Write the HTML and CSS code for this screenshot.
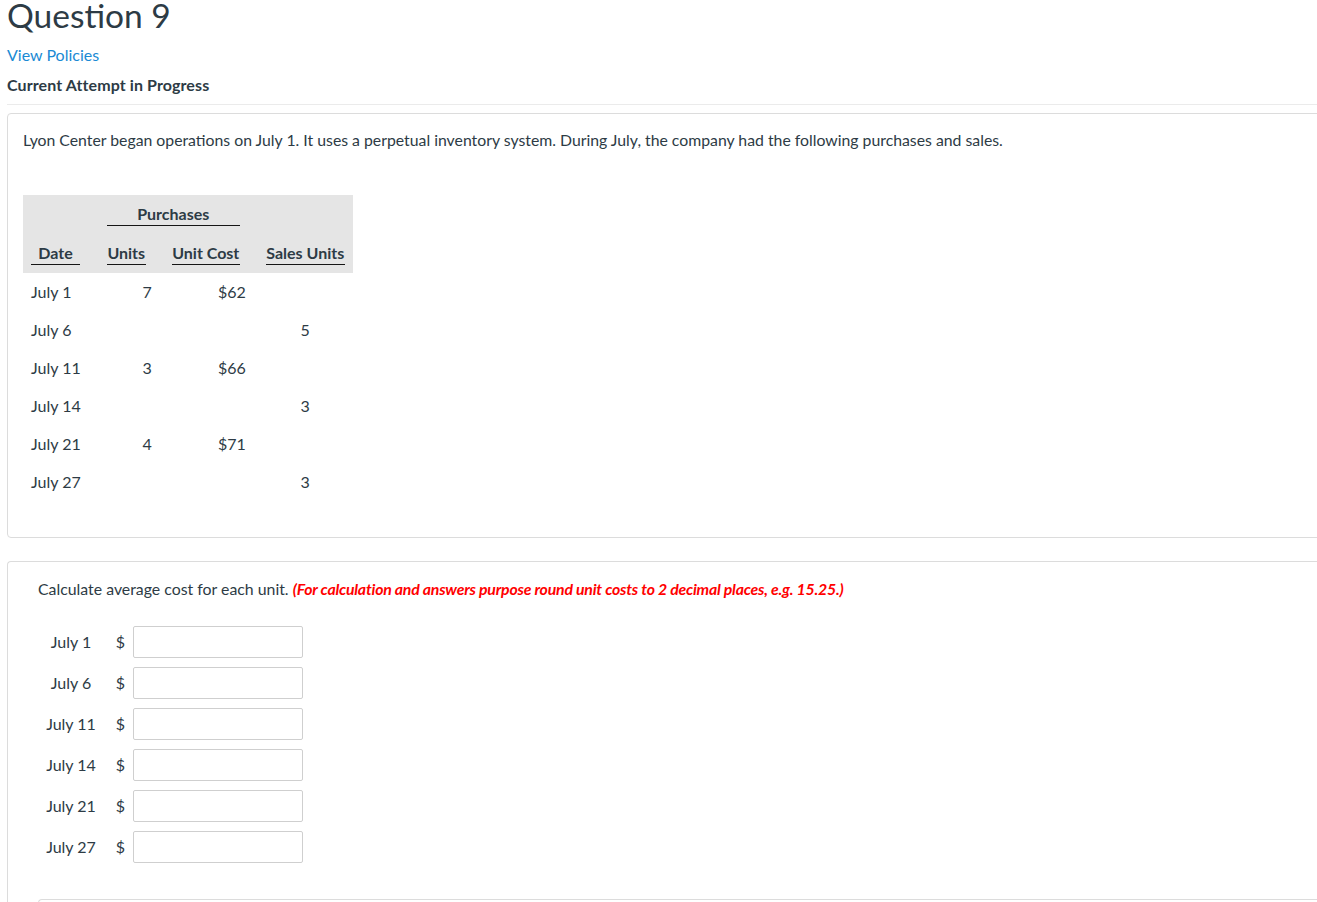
FILE: index.html
```html
<!DOCTYPE html>
<html lang="en">
<head>
    <meta charset="UTF-8">
    <title>Question 9</title>
    <link rel="stylesheet" href="styles.css">
</head>
<body>
    <div class="page">
        <h1 class="question-title">Question 9</h1>
        <a class="policies" href="#">View Policies</a>
        <div class="attempt">Current Attempt in Progress</div>

        <div class="panel intro">
            <p>Lyon Center began operations on July 1. It uses a perpetual inventory system. During July, the company had the following purchases and sales.</p>

            <table class="inventory">
                <thead>
                    <tr>
                        <th class="c-date"></th>
                        <th colspan="2" class="c-purch"><span>Purchases</span></th>
                        <th class="c-sales"></th>
                    </tr>
                    <tr>
                        <th class="c-date"><span>Date</span></th>
                        <th class="c-units"><span>Units</span></th>
                        <th class="c-cost"><span>Unit Cost</span></th>
                        <th class="c-sales"><span>Sales Units</span></th>
                    </tr>
                </thead>
                <tbody>
                    <tr><td class="c-date">July 1</td><td class="c-units">7</td><td class="c-cost">$62</td><td class="c-sales"></td></tr>
                    <tr><td class="c-date">July 6</td><td class="c-units"></td><td class="c-cost"></td><td class="c-sales">5</td></tr>
                    <tr><td class="c-date">July 11</td><td class="c-units">3</td><td class="c-cost">$66</td><td class="c-sales"></td></tr>
                    <tr><td class="c-date">July 14</td><td class="c-units"></td><td class="c-cost"></td><td class="c-sales">3</td></tr>
                    <tr><td class="c-date">July 21</td><td class="c-units">4</td><td class="c-cost">$71</td><td class="c-sales"></td></tr>
                    <tr><td class="c-date">July 27</td><td class="c-units"></td><td class="c-cost"></td><td class="c-sales">3</td></tr>
                </tbody>
            </table>
        </div>

        <div class="panel answer">
            <p class="instructions">Calculate average cost for each unit. <em class="note">(For calculation and answers purpose round unit costs to 2 decimal places, e.g. 15.25.)</em></p>

            <div class="answer-grid">
                <span class="day">July 1</span><span class="cur">$</span><input type="text">
                <span class="day">July 6</span><span class="cur">$</span><input type="text">
                <span class="day">July 11</span><span class="cur">$</span><input type="text">
                <span class="day">July 14</span><span class="cur">$</span><input type="text">
                <span class="day">July 21</span><span class="cur">$</span><input type="text">
                <span class="day">July 27</span><span class="cur">$</span><input type="text">
            </div>

            <div class="next-box"></div>
        </div>
    </div>
</body>
</html>
```

FILE: styles.css
```css
html, body {
    overflow-x: hidden;
}

body {
    margin: 0;
    font-family: "Lato", "Open Sans", sans-serif;
    font-size: 16px;
    color: #2d3b45;
    background-color: #fff;
}

.page {
    padding-left: 7px;
    margin-right: -20px;
}

.question-title {
    margin: 0;
    font-size: 33.5px;
    font-weight: 400;
    line-height: 0.92;
}

.policies {
    display: block;
    margin-top: 13px;
    color: #1a8ad4;
    text-decoration: none;
    line-height: 22px;
}

.attempt {
    margin-top: 8px;
    font-weight: 700;
    line-height: 22px;
    letter-spacing: 0.1px;
}

.panel {
    border: 1px solid #dcdcdc;
    border-radius: 4px;
}

.intro {
    margin-top: 17px;
    position: relative;
    padding: 15px 15px 36px;
}

/* thin rule between the header and the first panel */
.intro::before {
    content: "";
    position: absolute;
    left: -1px;
    right: 0;
    top: -10px;
    border-top: 1px solid #ebebeb;
}

.intro p {
    margin: 0 0 44px;
    font-size: 15.8px;
    line-height: 22px;
}

.inventory {
    border-collapse: collapse;
    border-spacing: 0;
}

.inventory th,
.inventory td {
    padding: 8px 13px;
    line-height: 22px;
}

.inventory thead {
    background-color: #e5e5e5;
}

.inventory th {
    font-weight: 700;
    text-align: center;
}

.inventory th span {
    display: block;
    border-bottom: 1px solid #151515;
}

.inventory .c-date {
    padding-left: 8px;
    width: 49px;
}

.inventory th.c-date span {
    width: 49px;
}

.inventory .c-units {
    width: 39px;
}

.inventory .c-cost {
    width: 68px;
}

.inventory .c-sales {
    padding-right: 8px;
    width: 79px;
}

.inventory td.c-date {
    text-align: left;
    white-space: nowrap;
}

.inventory td.c-units,
.inventory td.c-cost {
    text-align: right;
    padding-right: 7px;
}

.inventory td.c-sales {
    text-align: center;
}

.answer {
    margin-top: 23px;
    padding: 16px 0 0 30px;
    border-right: none;
}

.instructions {
    margin: 0;
    font-size: 15.85px;
    line-height: 22px;
}

.note {
    color: #f00;
    font-weight: 700;
    letter-spacing: -0.22px;
}

.answer-grid {
    display: grid;
    grid-template-columns: 66px 29px 170px;
    row-gap: 9px;
    align-items: center;
    margin-top: 26px;
}

.answer-grid .day,
.answer-grid .cur {
    text-align: center;
}

.answer-grid .cur {
    padding-left: 4px;
}

.answer-grid input {
    box-sizing: border-box;
    height: 32px;
    width: 170px;
    margin: 0;
    border: 1px solid #cfcfcf;
    border-radius: 2px;
    font: inherit;
}

.next-box {
    margin-top: 36px;
    height: 10px;
    border-top: 1px solid #dcdcdc;
    border-left: 1px solid #dcdcdc;
    border-radius: 4px 0 0 0;
}
```
